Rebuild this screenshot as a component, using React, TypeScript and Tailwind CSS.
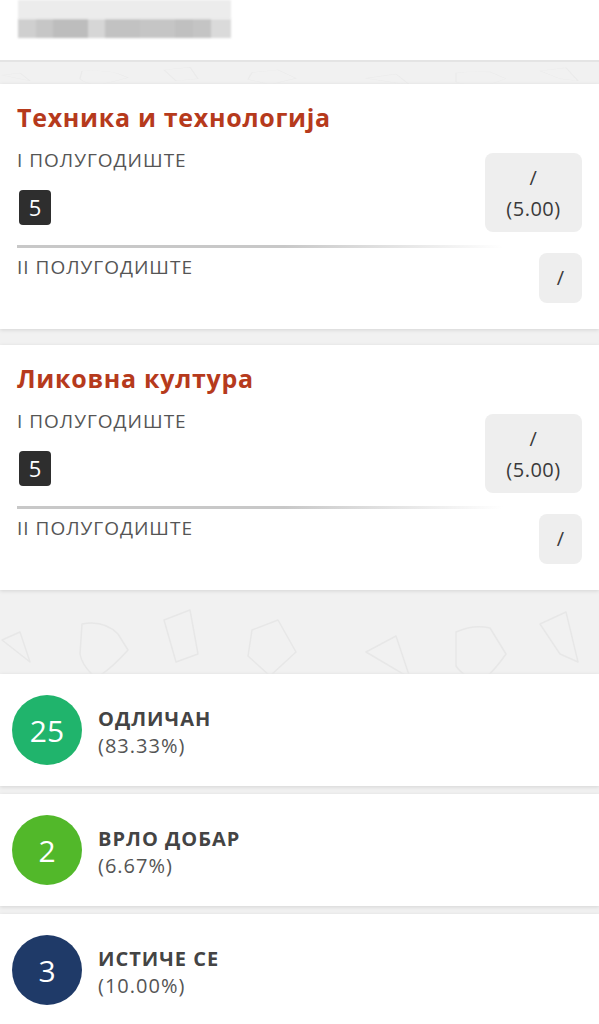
import { ReactNode } from "react";

const font = { fontFamily: '"Open Sans", "Noto Sans", sans-serif' };

function Doodles() {
  // faint background pattern of the app (shapes drawn in a light stroke)
  return (
    <svg className="absolute inset-0 w-full h-full" viewBox="0 0 599 84" preserveAspectRatio="none">
      <g fill="none" stroke="#e7e7e7" strokeWidth="1.5" strokeLinejoin="round">
        <path d="M2 50 L20 42 L30 72 Z" />
        <path d="M82 34 Q104 30 118 44 L128 60 Q110 80 96 88 Q82 76 80 64 Z" />
        <path d="M164 30 L190 20 L198 64 L176 72 Z" />
        <path d="M252 40 L278 30 L296 62 L270 86 L248 66 Z" />
        <path d="M366 62 L396 46 L410 88 Z" />
        <path d="M456 42 Q474 34 490 38 L506 64 Q492 84 480 92 Q462 86 456 76 Z" />
        <path d="M540 34 L566 22 L578 72 L560 64 Z" />
      </g>
    </svg>
  );
}

function GradeBox({ children, wide }: { children: ReactNode; wide?: boolean }) {
  return (
    <div
      className={
        wide
          ? "w-[97px] h-[79px] rounded-lg bg-[#eeeeee] flex flex-col items-center justify-center text-[20px] leading-[31px] tracking-[0.5px] text-[#3a3a3a]"
          : "w-[43px] h-[50px] rounded-lg bg-[#eeeeee] flex items-center justify-center text-[20px] text-[#3a3a3a]"
      }
    >
      {children}
    </div>
  );
}

function SubjectCard({ title, grade }: { title: string; grade: string }) {
  return (
    <div className="bg-white px-[17px] pt-[17px] pb-[26px] shadow-[0_1px_4px_rgba(0,0,0,0.12)]">
      <div className="text-[25px] leading-[32px] font-bold tracking-[0.7px] text-[#b63a1c]">{title}</div>
      <div className="flex justify-between items-start mt-[15px]">
        <div className="flex flex-col">
          <div className="text-[19px] leading-[24px] tracking-[1px] text-[#555555]">I ПОЛУГОДИШТЕ</div>
          <div className="mt-[18px] ml-[2px] w-[32px] h-[35px] rounded-[4px] bg-[#2e2e2e] text-white text-[22px] flex items-center justify-center">
            {grade}
          </div>
        </div>
        <div className="mt-[5px]">
          <GradeBox wide>
            <span>/</span>
            <span>(5.00)</span>
          </GradeBox>
        </div>
      </div>
      <div className="mt-[13px] h-[3px] w-[86%] bg-[linear-gradient(to_right,#c8c8c8_55%,rgba(200,200,200,0))]" />
      <div className="flex justify-between items-start mt-[5px]">
        <div className="mt-[2px] text-[19px] leading-[24px] tracking-[1px] text-[#555555]">II ПОЛУГОДИШТЕ</div>
        <GradeBox>/</GradeBox>
      </div>
    </div>
  );
}

function StatCard({ count, label, percent, color }: { count: string; label: string; percent: string; color: string }) {
  return (
    <div className="bg-white h-[112px] flex items-center pl-[12px] shadow-[0_1px_4px_rgba(0,0,0,0.12)]">
      <div
        className={`w-[70px] h-[70px] rounded-full flex items-center justify-center text-white text-[30px] ${color}`}
      >
        {count}
      </div>
      <div className="ml-[16px] mt-[4px] flex flex-col">
        <span className="text-[20px] leading-[27px] font-bold tracking-[1px] text-[#444444]">{label}</span>
        <span className="text-[20px] leading-[27px] tracking-[1px] text-[#555555]">{percent}</span>
      </div>
    </div>
  );
}

export default function App() {
  return (
    <div className="w-full min-h-[1024px] bg-[#f1f1f1] overflow-hidden" style={font}>
      <div className="bg-white h-[62px] border-b-2 border-[#e4e4e4] pl-[18px]">
        <div className="w-[213px] h-[19px] bg-[#ececec] blur-[1px]" />
        <div className="w-[213px] h-[19px] flex blur-[1px]">
          <div className="w-[18px] bg-[#cfcfcf]" />
          <div className="w-[17px] bg-[#c6c6c6]" />
          <div className="w-[35px] bg-[#bdbdbd]" />
          <div className="w-[17px] bg-[#d6d6d6]" />
          <div className="w-[35px] bg-[#c2c2c2]" />
          <div className="w-[35px] bg-[#c5c5c5]" />
          <div className="w-[18px] bg-[#c0c0c0]" />
          <div className="w-[18px] bg-[#c4c4c4]" />
          <div className="w-[20px] bg-[#dadada]" />
        </div>
      </div>
      <div className="relative h-[22px] overflow-hidden opacity-60">
        <Doodles />
      </div>
      <SubjectCard title="Техника и технологија" grade="5" />
      <div className="h-[16px]" />
      <SubjectCard title="Ликовна култура" grade="5" />
      <div className="relative h-[84px] overflow-hidden">
        <Doodles />
      </div>
      <div className="flex flex-col gap-[8px]">
        <StatCard count="25" label="ОДЛИЧАН" percent="(83.33%)" color="bg-[#20b46c]" />
        <StatCard count="2" label="ВРЛО ДОБАР" percent="(6.67%)" color="bg-[#52b82a]" />
        <StatCard count="3" label="ИСТИЧЕ СЕ" percent="(10.00%)" color="bg-[#1f3a68]" />
      </div>
    </div>
  );
}
